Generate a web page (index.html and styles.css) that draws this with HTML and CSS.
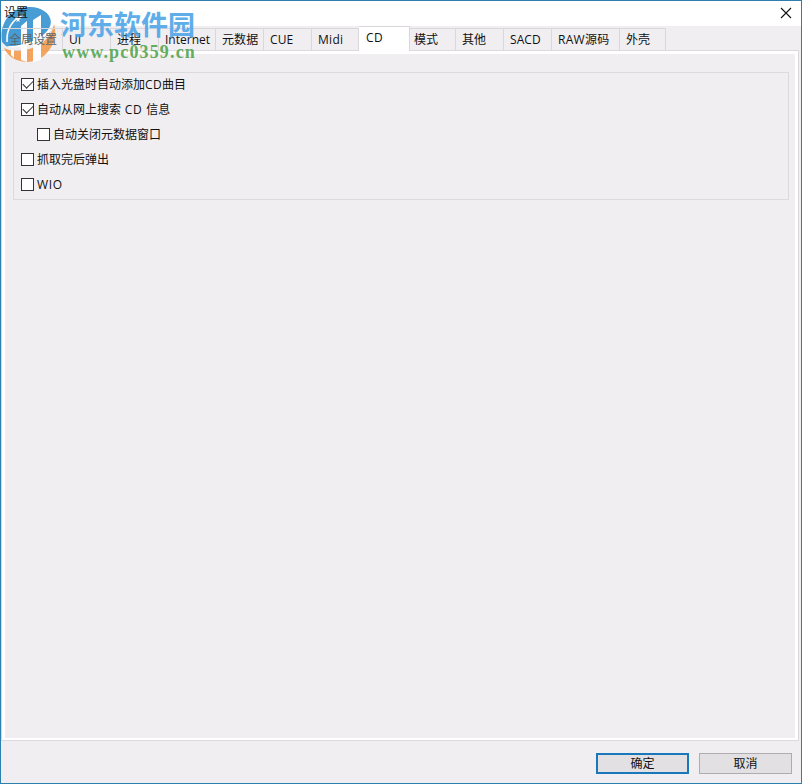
FILE: index.html
```html
<!DOCTYPE html>
<html lang="zh-CN">
<head>
<meta charset="utf-8">
<title>设置</title>
<link rel="stylesheet" href="styles.css">
</head>
<body>
<main class="window">
  <header class="titlebar">
    <span class="title">设置</span>
    <svg class="close" width="12" height="12" viewBox="0 0 12 12"><path d="M1 1l10 10M11 1L1 11" fill="none" stroke="#111" stroke-width="1.1"/></svg>
  </header>
  <nav class="tabs">
    <span class="tab w60 covered">全局设置</span><span class="tab">UI</span><span class="tab">进程</span><span class="tab w57">Internet</span><span class="tab">元数据</span><span class="tab">CUE</span><span class="tab w47">Midi</span><span class="tab active">CD</span><span class="tab w46 after">模式</span><span class="tab">其他</span><span class="tab">SACD</span><span class="tab w68">RAW源码</span><span class="tab w46">外壳</span>
  </nav>
  <section class="pane">
    <div class="group">
      <label class="row"><i class="box checked"></i><span>插入光盘时自动添加<span class="latin">CD</span>曲目</span></label>
      <label class="row"><i class="box checked"></i><span>自动从网上搜索<span class="spaced"> CD </span>信息</span></label>
      <label class="row indent"><i class="box"></i><span>自动关闭元数据窗口</span></label>
      <label class="row"><i class="box"></i><span>抓取完后弹出</span></label>
      <label class="row"><i class="box"></i><span class="spaced">WIO</span></label>
    </div>
  </section>
  <footer class="actions">
    <button class="btn primary">确定</button>
    <button class="btn">取消</button>
  </footer>
</main>
<div class="watermark">
  <svg class="logo" width="60" height="66" viewBox="0 0 60 66">
    <path fill="#2e90cf" d="M2 42C-1 23 11 7 28 7c11-1 21 5 25 14 1 9-7 18-19 23L7 47z"/>
    <path fill="#f39a4b" d="M4 48c4 2 8 3 13 3 18-1 34-10 37-27 5 17-7 37-26 38C17 62 8 57 4 48z"/>
    <path fill="#fff" d="M21 26l6-5v41l-6-2zM33 20l8-5v45l-8 2zM11 50h3v8l-3-3z"/>
    <path fill="#fff" d="M46 12c12 7 9 20-6 28-12 7-27 9-36 6 11 1 23-2 33-7 14-8 18-18 9-27z"/>
    <path fill="none" stroke="#fff" stroke-width="1.6" d="M7 42C6 29 13 19 23 15"/>
    <path fill="#fff" d="M18 16l1 2h2l-2 2 1 2-2-1-2 1 1-2-2-2h2z"/>
  </svg>
  <div class="brand">河东软件园</div>
  <div class="url">www.pc0359.cn</div>
</div>
</body>
</html>
```
FILE: styles.css
```css
* { box-sizing: border-box; }
body { margin: 0; font: 12px/16px "Open Sans", "Noto Sans CJK SC", sans-serif; color: #111; }
.window { width: 802px; height: 784px; background: #f0eef1; border: 1px solid #2d7fae; display: flex; flex-direction: column; }
.titlebar { height: 25px; background: #fff; display: flex; justify-content: space-between; padding: 4px 9px 0 3px; }
.title { position: relative; z-index: 2; }
.close { margin-top: 2px; }
.tabs { height: 25px; padding: 0 0 1px 2px; display: flex; align-items: flex-end; }
.tab { width: 48px; height: 22px; border-top: 1px solid #d9d7db; border-right: 1px solid #d9d7db; padding: 3px 0 0 6px; white-space: nowrap; letter-spacing: .1px; }
.covered { position: relative; z-index: 2; color: #5f6468; letter-spacing: 0; }
.w60 { width: 60px; }
.w57 { width: 57px; letter-spacing: 0; }
.w47 { width: 47px; letter-spacing: .3px; }
.w46 { width: 46px; }
.w68 { width: 68px; letter-spacing: .3px; }
.active { position: relative; z-index: 1; width: 51px; height: 25px; margin-bottom: -1px; background: #fff; padding-left: 7px; letter-spacing: .4px; }
.after { padding-left: 4px; }
.pane { height: 689px; margin: 0 3px 0 1px; border: 3px solid #fff; border-bottom-width: 2px; box-shadow: 0 0 0 1px #d9d9df; padding: 18px 6px 0 8px; }
.group { height: 128px; border: 1px solid #dcdadd; padding-left: 7px; }
.row { height: 25px; display: flex; align-items: center; gap: 3px; }
.row:first-child { height: 24px; padding-bottom: 1px; }
.latin { letter-spacing: .4px; }
.spaced { letter-spacing: .7px; }
.indent { padding-left: 16px; }
.box { width: 13px; height: 13px; border: 1px solid #333; background: #fff; }
.checked::after { content: ""; display: block; width: 9px; height: 5px; margin: 1px 0 0 1px; border: solid #333; border-width: 0 0 1.3px 1.3px; transform: rotate(-45deg); }
.actions { display: flex; justify-content: flex-end; gap: 10px; padding: 13px 9px 0 0; }
.btn { width: 93px; height: 21px; padding: 0; border: 1px solid #adadb0; background: #e2e0e3; font: inherit; line-height: 16px; color: #111; }
.primary { border: 2px solid #1878b9; }
.watermark { position: absolute; z-index: 1; left: 0; top: 0; width: 200px; height: 66px; opacity: .88; }
.logo { position: absolute; left: 0; top: 0; }
.brand { position: absolute; left: 60px; top: 7px; font: bold 27px/34px "Noto Sans CJK SC", sans-serif; color: #4aa3e8; white-space: nowrap; }
.url { position: absolute; left: 62px; top: 41px; font: bold 18px/22px "Liberation Serif", serif; color: #4fa44b; letter-spacing: 1.15px; }
```
